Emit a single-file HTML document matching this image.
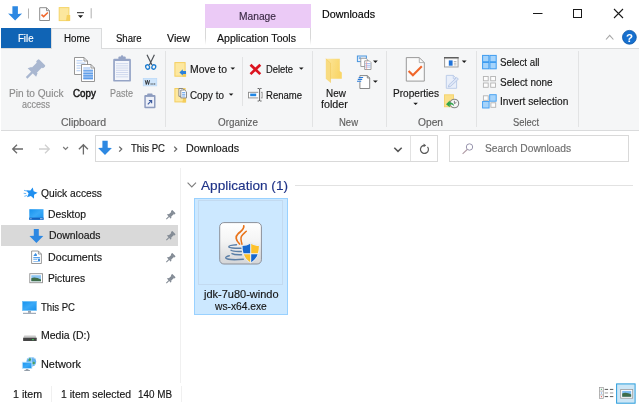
<!DOCTYPE html>
<html>
<head>
<meta charset="utf-8">
<title>Downloads</title>
<style>
html,body{margin:0;padding:0;}
body{width:640px;height:405px;overflow:hidden;background:#fff;position:relative;filter:blur(0.35px);
  font-family:"Liberation Sans",sans-serif;font-size:12px;color:#000;}
.a{position:absolute;box-sizing:border-box;}
.t{position:absolute;white-space:nowrap;line-height:16px;height:16px;transform-origin:0 0;-webkit-text-stroke:0.15px currentColor;}
.sep{position:absolute;width:1px;background:#e2e3e4;}
svg{position:absolute;overflow:visible;}
</style>
</head>
<body>

<!-- title bar -->
<div class="a" style="left:205px;top:3.500px;width:106px;height:24.500px;background:#ebcaf6;"></div>

<!-- tab row -->
<div class="a" style="left:1px;top:48px;width:638px;height:1px;background:#dadbdc;"></div>
<div class="a" style="left:1px;top:27.500px;width:50px;height:20.500px;background:#1064b5;"></div>
<div class="a" style="left:51px;top:27.500px;width:51px;height:21.500px;background:#f5f6f7;border:1px solid #dadbdc;border-bottom:none;"></div>
<div class="a" style="left:205px;top:28px;width:1px;height:17px;background:linear-gradient(#d8d8d8 60%,#fff);"></div>
<div class="a" style="left:310px;top:28px;width:1px;height:17px;background:linear-gradient(#d8d8d8 60%,#fff);"></div>

<!-- ribbon -->
<div class="a" style="left:1px;top:49px;width:638px;height:82px;background:#f5f6f7;"></div>
<div class="a" style="left:1px;top:130px;width:638px;height:1px;background:#dadbdc;"></div>
<div class="sep" style="left:165px;top:51px;height:76px;"></div>
<div class="sep" style="left:242px;top:57px;height:49px;"></div>
<div class="sep" style="left:312px;top:51px;height:76px;"></div>
<div class="sep" style="left:386px;top:51px;height:76px;"></div>
<div class="sep" style="left:476px;top:51px;height:76px;"></div>
<div class="sep" style="left:578px;top:51px;height:76px;"></div>

<!-- address row -->
<div class="a" style="left:95px;top:135px;width:343px;height:27px;border:1px solid #d9d9d9;"></div>
<div class="a" style="left:410px;top:136px;width:1px;height:25px;background:#e2e2e2;"></div>
<div class="a" style="left:448.500px;top:135px;width:180.500px;height:27px;border:1px solid #d9d9d9;"></div>

<!-- nav pane -->
<div class="a" style="left:1px;top:225px;width:177px;height:21px;background:#d9d9d9;"></div>
<div class="a" style="left:180px;top:168px;width:1px;height:215px;background:#f0f0f0;"></div>

<!-- content -->
<div class="a" style="left:295px;top:185px;width:338px;height:1px;background:#e2e2e2;"></div>
<div class="a" style="left:194px;top:198px;width:94px;height:117px;background:#cce8ff;border:1px solid #99d1ff;"></div>
<div class="a" style="left:198px;top:200px;width:85px;height:85px;border:1px solid #c3daf0;"></div>
<div class="a" style="left:51px;top:386px;width:1px;height:16px;background:#f0f0f0;"></div>
<div class="a" style="left:181px;top:386px;width:1px;height:16px;background:#f0f0f0;"></div>

<!-- title bar icons -->
<svg style="left:0;top:0" width="100" height="28" viewBox="0 0 100 28">
  <!-- blue down arrow -->
  <path d="M12.4 6.300h5.500v7.700l4.200-0.500-7 7.100-7-7.100 4.300 0.500z" fill="#2d88e2"/>
  <rect x="28" y="8.5" width="1" height="10" fill="#b4b4b4"/>
  <!-- properties doc -->
  <path d="M39.700 7.700h6.800l3 3v9.800h-9.800z" fill="#fdfdfd" stroke="#8e8e8e" stroke-width="1"/>
  <path d="M46.500 7.700v3h3" fill="none" stroke="#8e8e8e" stroke-width="1"/>
  <path d="M41.500 14.600l2.100 2 4.300-4.100" fill="none" stroke="#f0672c" stroke-width="1.500"/>
  <!-- folder -->
  <rect x="59.200" y="7.600" width="9.700" height="13" fill="#fce79e" stroke="#f6d568" stroke-width="1"/>
  <path d="M66.800 15h3.400v6h-4.200z" fill="#f5d05f"/>
  <!-- dropdown -->
  <rect x="77" y="12.100" width="7" height="1.100" fill="#3a3a3a"/>
  <path d="M77.900 15.200h5.200l-2.600 2.800z" fill="#1a1a1a"/>
  <rect x="90.600" y="8.200" width="1.200" height="10.200" fill="#bcbcbc"/>
</svg>
<!-- window controls -->
<svg style="left:520px;top:0" width="120" height="28" viewBox="520 0 120 28">
  <rect x="533" y="13" width="9.500" height="1" fill="#1a1a1a"/>
  <rect x="573.500" y="9.500" width="8" height="8" fill="none" stroke="#1a1a1a" stroke-width="1"/>
  <path d="M614 9l9 9M623 9l-9 9" stroke="#1a1a1a" stroke-width="1.100" fill="none"/>
</svg>
<!-- ribbon collapse + help -->
<svg style="left:600px;top:28px" width="40" height="20" viewBox="600 28 40 20">
  <path d="M606 39.500l3.700-4.200 3.700 4.200" fill="none" stroke="#a6a6a6" stroke-width="1.100"/>
  <circle cx="629.400" cy="37.300" r="6.900" fill="#1670cf" stroke="#0d56a6" stroke-width="0.800"/>
  <text x="629.400" y="41.600" font-family="Liberation Sans,sans-serif" font-weight="bold" font-size="11.500" fill="#fff" text-anchor="middle">?</text>
</svg>
<!-- ribbon icons -->
<svg style="left:0;top:48px" width="640" height="84" viewBox="0 48 640 84">
  <defs>
    <linearGradient id="gfold" x1="0" y1="0" x2="0" y2="1"><stop offset="0" stop-color="#fdeaa6"/><stop offset="1" stop-color="#f8d366"/></linearGradient>
    <linearGradient id="gfold2" x1="0" y1="0" x2="1" y2="0.300"><stop offset="0" stop-color="#fce69c"/><stop offset="1" stop-color="#f9d669"/></linearGradient>
    <linearGradient id="gdoc" x1="0" y1="0" x2="0" y2="1"><stop offset="0" stop-color="#cfe0f8"/><stop offset="1" stop-color="#8cb8f0"/></linearGradient>
  </defs>
  <!-- pin -->
  <g transform="translate(26.600 77.900) rotate(45)" fill="#a9b7d0">
    <rect x="-1.100" y="-8.500" width="2.200" height="8.500"/>
    <path d="M-6 -7.500h12l-1.600-3.600h-8.800z"/>
    <rect x="-3.600" y="-18.500" width="7.200" height="8"/>
    <rect x="-5" y="-22" width="10" height="4" rx="1.200"/>
  </g>
  <!-- copy -->
  <g>
    <path d="M74.500 57.500h9.500l3.500 3.500v13.500h-13z" fill="#fff" stroke="#8a8a8a" stroke-width="0.900"/>
    <path d="M84 57.500v3.500h3.500" fill="none" stroke="#8a8a8a" stroke-width="0.900"/>
    <g fill="#c3d8f6"><rect x="76.500" y="60" width="6" height="1.300"/><rect x="76.500" y="62.500" width="9" height="1.300"/><rect x="76.500" y="65" width="9" height="1.300"/><rect x="76.500" y="67.500" width="4" height="1.300"/><rect x="76.500" y="70" width="4" height="1.300"/></g>
    <path d="M81.500 64.500h9.500l3.500 3.500v13.500h-13z" fill="#fff" stroke="#8a8a8a" stroke-width="0.900"/>
    <path d="M91 64.500v3.500h3.500" fill="none" stroke="#8a8a8a" stroke-width="0.900"/>
    <rect x="83.300" y="67" width="7" height="2.500" fill="#c6dbf8"/>
    <rect x="83.300" y="69" width="9.700" height="10.500" fill="url(#gdoc)"/>
    <g fill="#4f94e6"><rect x="83.300" y="70.300" width="9.700" height="1"/><rect x="83.300" y="72.800" width="9.700" height="1"/><rect x="83.300" y="75.300" width="9.700" height="1"/><rect x="83.300" y="77.800" width="9.700" height="1"/></g>
  </g>
  <!-- paste (disabled) -->
  <g>
    <rect x="113.200" y="58.800" width="17.700" height="22.800" rx="1.200" fill="#95a4c6"/>
    <rect x="118.400" y="56.500" width="7.300" height="3.600" rx="1" fill="#95a4c6"/>
    <rect x="120.900" y="55.300" width="2.300" height="2" rx="1" fill="#95a4c6"/>
    <rect x="114.900" y="61" width="14.300" height="19" fill="#f4f6fb"/>
    <g fill="#cbd5ec"><rect x="116" y="63.200" width="12.200" height="0.900"/><rect x="116" y="65.400" width="12.200" height="0.900"/><rect x="116" y="67.600" width="12.200" height="0.900"/><rect x="116" y="69.800" width="12.200" height="0.900"/><rect x="116" y="72" width="12.200" height="0.900"/><rect x="116" y="74.200" width="12.200" height="0.900"/><rect x="116" y="76.400" width="12.200" height="0.900"/></g>
  </g>
  <!-- cut -->
  <g fill="none">
    <path d="M147 54.800l5 10.300M154.400 54.800l-5 10.300" stroke="#4d5157" stroke-width="1.200"/>
    <ellipse cx="147.600" cy="67" rx="1.900" ry="2.200" stroke="#1b7bcf" stroke-width="1.300" transform="rotate(-20 147.600 67)"/>
    <ellipse cx="153.800" cy="67" rx="1.900" ry="2.200" stroke="#1b7bcf" stroke-width="1.300" transform="rotate(20 153.800 67)"/>
  </g>
  <!-- copy path -->
  <g>
    <rect x="143.200" y="78.300" width="13.600" height="7.600" fill="#cfe5fb" stroke="#b4d6f8" stroke-width="0.600"/>
    <path d="M145.200 80.200l1.100 4.300 1.100-4.300 1.100 4.300 1.100-4.300" fill="none" stroke="#1a1a1a" stroke-width="0.800"/>
    <rect x="150.600" y="83.500" width="1" height="1" fill="#1a1a1a"/><rect x="152.400" y="83.500" width="1" height="1" fill="#1a1a1a"/><rect x="154.200" y="83.500" width="1" height="1" fill="#1a1a1a"/>
  </g>
  <!-- paste shortcut -->
  <g>
    <rect x="144.300" y="95" width="11.200" height="13.200" rx="1" fill="#8d9cbf"/>
    <rect x="147.200" y="93.600" width="5.400" height="2.600" rx="0.800" fill="#8d9cbf"/>
    <rect x="145.800" y="96.900" width="8.200" height="9.800" fill="#eef1f9"/>
    <path d="M147.800 104.300l3.400-3.400M148.900 100.500h2.700v2.700" fill="none" stroke="#3e5c9e" stroke-width="1.200"/>
  </g>
  <!-- move to -->
  <g>
    <rect x="174.900" y="62.600" width="10.200" height="13.600" fill="#fde8a0" stroke="#f4cf5f"/>
    <path d="M183.200 71.500h2.900v5.200h-3.700z" fill="#f4cd5b"/>
    <path d="M186 70.900v3h-3.200v1.700l-3.400-3.200 3.400-3.200v1.700z" fill="#2a80dc"/>
    <path d="M230.500 67.500h4.600l-2.300 2.300z" fill="#1a1a1a"/>
  </g>
  <!-- copy to -->
  <g>
    <rect x="174.900" y="88.500" width="10.200" height="13.400" fill="#fde8a0" stroke="#f4cf5f"/>
    <path d="M183.200 97.500h2.900v4.900h-3.700z" fill="#f4cd5b"/>
    <path d="M178.900 88.500h3.900l1.800 1.800v6h-5.700z" fill="#fff" stroke="#7d7d7d" stroke-width="0.900"/>
    <path d="M180.800 90h3.900l1.800 1.800v6.100h-5.700z" fill="#fff" stroke="#7d7d7d" stroke-width="0.900"/>
    <path d="M182.100 92.600h3.200M182.100 94.300h3.200M182.100 96h3.200" stroke="#5b9be8" stroke-width="0.900"/>
    <path d="M228.800 93.400h4.600l-2.300 2.300z" fill="#1a1a1a"/>
  </g>
  <!-- delete -->
  <path d="M250.500 64.700l9.800 9.400M260.300 64.700l-9.800 9.400" stroke="#dc1420" stroke-width="2.700" fill="none"/>
  <path d="M299 67.500h4.600l-2.300 2.300z" fill="#1a1a1a"/>
  <!-- rename -->
  <g>
    <rect x="248.500" y="92.300" width="13.600" height="5.600" fill="#fff" stroke="#8a8a8a" stroke-width="0.900"/>
    <rect x="250.200" y="93.600" width="6" height="2.600" fill="#1f86e4"/>
    <rect x="258.200" y="90" width="2.800" height="9.500" fill="#f5f6f7"/>
    <path d="M259.600 88.800v12M257.600 88.500h1.400l0.600 0.500 0.600-0.500h1.400M257.600 101h1.400l0.600-0.500 0.600 0.500h1.400" fill="none" stroke="#555" stroke-width="0.900"/>
  </g>
  <!-- new folder -->
  <g>
    <path d="M326 58.700h13.800v12.200l2 1.500v6.300h-12z" fill="url(#gfold2)"/>
    <path d="M325.800 58.700l4.700 4.400v19.600l-4.700-4z" fill="#f8db80"/>
    <path d="M325.800 58.700l4.700 4.400v19.600" fill="none" stroke="#f1ca5c" stroke-width="0.600"/>
  </g>
  <!-- new item -->
  <g>
    <rect x="357.400" y="56" width="9" height="5.600" fill="#e4effb" stroke="#4a96de" stroke-width="1"/>
    <rect x="358.800" y="57.300" width="2.200" height="1.600" fill="#6aa9e6"/>
    <path d="M360.800 58.300h5.200l1.600 1.600v6.600h-6.800z" fill="#fff" stroke="#8a8a8a" stroke-width="0.800"/>
    <path d="M364.700 60.800h4.600l1.700 1.700v7h-6.300z" fill="#fff" stroke="#8a8a8a" stroke-width="0.800"/>
    <path d="M365.300 63.500h5.200M365.300 65.300h5.200M365.300 67.100h5.200" stroke="#7fa6ec" stroke-width="0.700"/>
    <path d="M366.600 61.500v7.800" stroke="#ee9a9a" stroke-width="0.700"/>
    <path d="M373 60.600h4.800l-2.400 2.400z" fill="#1a1a1a"/>
  </g>
  <!-- easy access -->
  <g>
    <path d="M359.900 75.600h7.400l2.400 2.400v10.500h-9.800z" fill="#fff" stroke="#7a7a7a" stroke-width="0.900"/>
    <path d="M367.300 75.600v2.400h2.400" fill="none" stroke="#7a7a7a" stroke-width="0.900"/>
    <rect x="359.300" y="76.700" width="1.400" height="5.500" fill="#f5f6f7"/>
    <path d="M358.700 77.500h4.400M357.800 79.400h4.400M357 81.300h4.200" stroke="#2b7bd8" stroke-width="1.100"/>
    <path d="M373 80.400h4.800l-2.400 2.400z" fill="#1a1a1a"/>
  </g>
  <!-- properties -->
  <g>
    <path d="M406.300 57.600h13l5 5v18.500h-18z" fill="#fafafa" stroke="#8e8e8e" stroke-width="0.900"/>
    <path d="M419.300 57.600v5h5" fill="none" stroke="#a0a0a0" stroke-width="0.800"/>
    <path d="M408.600 71l4.300 4.200 8.900-8.900" fill="none" stroke="#f0662a" stroke-width="2.100"/>
    <path d="M413.300 102.700h4.600l-2.300 2.300z" fill="#1a1a1a"/>
  </g>
  <!-- open -->
  <g>
    <rect x="444.500" y="57.500" width="13.600" height="9.500" fill="#f2f2f2" stroke="#9c9c9c" stroke-width="0.900"/>
    <rect x="444" y="57" width="14.600" height="1.500" fill="#5e5e5e"/>
    <rect x="445.800" y="59.800" width="11" height="6.200" fill="#fff"/>
    <rect x="448.800" y="60.400" width="3.800" height="5.300" fill="#1f72d8"/>
    <path d="M453.800 61.500h2.600M453.800 63.200h2.600M453.800 64.900h2.600" stroke="#9a9a9a" stroke-width="0.700"/>
    <path d="M461.800 60.600h4.800l-2.400 2.400z" fill="#1a1a1a"/>
  </g>
  <!-- edit (disabled) -->
  <g>
    <path d="M446.300 75.400h7l3.300 3.300v9.600h-10.300z" fill="#e9effa" stroke="#b7c8e7" stroke-width="0.900"/>
    <path d="M453.300 75.400v3.300h3.300" fill="none" stroke="#b7c8e7" stroke-width="0.800"/>
    <path d="M448.300 87l0.600-2.200 7.800-7.300 1.700 1.600-7.800 7.300z" fill="#dde6f6" stroke="#b0c2e3" stroke-width="0.800"/>
  </g>
  <!-- history -->
  <g>
    <rect x="444.400" y="94.800" width="9.200" height="12" fill="#fbe08a" stroke="#f3cf62" stroke-width="0.800"/>
    <circle cx="454.400" cy="103.500" r="4.300" fill="#f6f6f6" stroke="#858585" stroke-width="1.100"/>
    <path d="M454.400 100.800v2.800l2-1.200" fill="none" stroke="#666" stroke-width="0.800"/>
    <path d="M446 104.200l3.800-3.600v2c2.300-0.300 4 0.900 4.400 3.600-1.100-1.300-2.400-1.800-4.400-1.600v2.600z" fill="#2fa54c"/>
  </g>
  <!-- select all -->
  <g fill="#a6d4fb" stroke="#3e9cf0" stroke-width="1">
    <rect x="482.600" y="55.400" width="6.300" height="6.300"/><rect x="489.900" y="55.400" width="6.300" height="6.300"/>
    <rect x="482.600" y="62.500" width="6.300" height="6.300"/><rect x="489.900" y="62.500" width="6.300" height="6.300"/>
  </g>
  <!-- select none -->
  <g fill="#fdfdfd" stroke="#b3b3b3" stroke-width="0.900">
    <rect x="483.400" y="76.500" width="4.800" height="4.300"/><rect x="490.700" y="76.500" width="4.800" height="4.300"/>
    <rect x="483.400" y="83" width="4.800" height="4.300"/><rect x="490.700" y="83" width="4.800" height="4.300"/>
  </g>
  <!-- invert -->
  <g stroke-width="0.900">
    <rect x="483.400" y="95.800" width="4.800" height="4.500" fill="#fdfdfd" stroke="#b3b3b3"/>
    <rect x="490.900" y="102.800" width="4.800" height="4.500" fill="#fdfdfd" stroke="#b3b3b3"/>
    <rect x="489.700" y="94.700" width="6.500" height="6.500" fill="#a6d4fb" stroke="#3e9cf0"/>
    <rect x="482.600" y="101.500" width="6.500" height="6.500" fill="#a6d4fb" stroke="#3e9cf0"/>
  </g>
</svg>
<!-- address row icons -->
<svg style="left:0;top:131px" width="640" height="36" viewBox="0 131 640 36">
  <path d="M23 149h-10M17 144.800l-4.300 4.200 4.300 4.200" fill="none" stroke="#6a6a6a" stroke-width="1.300"/>
  <path d="M39 149h10M45 144.800l4.300 4.200-4.300 4.200" fill="none" stroke="#d0d0d0" stroke-width="1.300"/>
  <path d="M63.200 147l2.400 2.500 2.400-2.500" fill="none" stroke="#7a7a7a" stroke-width="1.200"/>
  <path d="M83.400 154.400v-9.500M78.900 149.200l4.500-4.500 4.500 4.500" fill="none" stroke="#6a6a6a" stroke-width="1.300"/>
  <path d="M102.400 140.800h5.300v7l4.200 0.200-6.900 7-6.900-7 4.300-0.200z" fill="#2d88e2"/>
  <path d="M119.200 146.600l2.500 2.500-2.500 2.500" fill="none" stroke="#666" stroke-width="1.300"/>
  <path d="M174.200 146.600l2.500 2.500-2.500 2.500" fill="none" stroke="#666" stroke-width="1.300"/>
  <path d="M394.300 147.800l3.700 3.600 3.700-3.600" fill="none" stroke="#555" stroke-width="1.500"/>
  <path d="M427.500 146.800a4 4 0 1 1-3.400-1.400" fill="none" stroke="#5a5a5a" stroke-width="1.200"/>
  <path d="M423.600 143.600l2.600 1.800-2.600 1.800z" fill="#5a5a5a"/>
  <circle cx="469.500" cy="147" r="3.200" fill="none" stroke="#9794ad" stroke-width="1"/>
  <path d="M467.200 149.500l-4.600 4.300" stroke="#b09ba5" stroke-width="1.100"/>
</svg>
<!-- nav icons -->
<svg style="left:0;top:168px" width="182" height="216" viewBox="0 168 182 216">
  <defs>
    <linearGradient id="gscr" x1="0" y1="0" x2="1" y2="1"><stop offset="0" stop-color="#1692ee"/><stop offset="0.500" stop-color="#3aa9f7"/><stop offset="1" stop-color="#1792ee"/></linearGradient>
  </defs>
  <!-- quick access star -->
  <path transform="rotate(12 31.500 193.300) translate(0.500 -0.200)" d="M31 187.600l1.700 3.500 4.100 0.500-3 2.700 0.800 4-3.600-2-3.600 2 0.800-4-3-2.700 4.100-0.500z" fill="#1f8ff0"/>
  <path d="M24 190.300l3 0.800M23.700 193.300l2.500 0.300M24.300 196.300l2.600-0.800" stroke="#5aaef5" stroke-width="0.900"/>
  <!-- desktop -->
  <rect x="29.300" y="209.200" width="14.200" height="10.600" fill="url(#gscr)"/>
  <rect x="29.300" y="217.600" width="14.200" height="2.200" fill="#1560bd"/>
  <rect x="30.300" y="218.400" width="1.200" height="0.800" fill="#cfe6ff"/><rect x="40" y="218.400" width="2.600" height="0.800" fill="#cfe6ff"/>
  <!-- downloads -->
  <path d="M33.800 228.900h5v6.800l4.500 0.200-6.900 7.100-6.900-7.100 4.300-0.200z" fill="#2d88e2"/>
  <!-- documents -->
  <path d="M31.600 251h6.800l3 3v9.500h-9.800z" fill="#fff" stroke="#8e8e8e" stroke-width="0.900"/>
  <path d="M38.400 251v3h3" fill="none" stroke="#8e8e8e" stroke-width="0.900"/>
  <path d="M33.300 256l2.200-3 1.400 1.600v1.400z" fill="#3d8fe0"/>
  <rect x="33.300" y="257" width="6.600" height="1.300" fill="#5aa2ea"/><rect x="33.300" y="259" width="4" height="1" fill="#8bbdf0"/><rect x="38" y="258.800" width="2" height="2.200" fill="#3d8fe0"/><rect x="33.300" y="261" width="6.600" height="0.900" fill="#8bbdf0"/>
  <!-- pictures -->
  <rect x="29.800" y="273.700" width="12.700" height="9" fill="#fff" stroke="#8e8e8e" stroke-width="0.900"/>
  <rect x="31.300" y="275.200" width="9.700" height="6" fill="#8ec5f2"/>
  <path d="M31.300 278.200c3-1.500 6-0.500 9.700 1.200v1.800h-9.700z" fill="#3f6d4a"/>
  <!-- pins -->
  <g transform="translate(166.300 219.2) rotate(45) scale(0.9)" fill="#838b95">
    <rect x="-0.550" y="-4.500" width="1.100" height="4.500"/>
    <path d="M-3.200 -4h6.400l-0.900-1.900h-4.600z"/>
    <rect x="-1.900" y="-10" width="3.800" height="4.400"/>
    <rect x="-2.700" y="-12" width="5.400" height="2.300" rx="0.600"/>
  </g>
  <g transform="translate(166.300 240.2) rotate(45) scale(0.9)" fill="#838b95">
    <rect x="-0.550" y="-4.500" width="1.100" height="4.500"/>
    <path d="M-3.200 -4h6.400l-0.900-1.900h-4.600z"/>
    <rect x="-1.900" y="-10" width="3.800" height="4.400"/>
    <rect x="-2.700" y="-12" width="5.400" height="2.300" rx="0.600"/>
  </g>
  <g transform="translate(166.300 262.2) rotate(45) scale(0.9)" fill="#838b95">
    <rect x="-0.550" y="-4.500" width="1.100" height="4.500"/>
    <path d="M-3.200 -4h6.400l-0.900-1.900h-4.600z"/>
    <rect x="-1.900" y="-10" width="3.800" height="4.400"/>
    <rect x="-2.700" y="-12" width="5.400" height="2.300" rx="0.600"/>
  </g>
  <g transform="translate(166.300 283.2) rotate(45) scale(0.9)" fill="#838b95">
    <rect x="-0.550" y="-4.500" width="1.100" height="4.500"/>
    <path d="M-3.200 -4h6.400l-0.900-1.900h-4.600z"/>
    <rect x="-1.900" y="-10" width="3.800" height="4.400"/>
    <rect x="-2.700" y="-12" width="5.400" height="2.300" rx="0.600"/>
  </g>
  <!-- this pc -->
  <rect x="22.500" y="301.400" width="14" height="9" fill="url(#gscr)" stroke="#6fc0f7" stroke-width="0.800"/>
  <rect x="28" y="310.800" width="3" height="2" fill="#9aa3ad"/>
  <rect x="23" y="312.800" width="13" height="1" fill="#8a98a8"/>
  <!-- media drive -->
  <path d="M24.300 335.500h11.200l1.200 2.500h-13.600z" fill="#c9c9c9"/>
  <rect x="23.100" y="337.800" width="13.600" height="3.300" rx="0.500" fill="#454545"/>
  <rect x="32.200" y="339" width="1.500" height="1.200" fill="#39d353"/>
  <!-- network -->
  <circle cx="31.300" cy="361.800" r="4.900" fill="#5fb0ee"/>
  <path d="M27.500 359c2-1.500 5-2 7.500-0.500M28 364.500c2 1 5 1 7.200-0.800M31.300 357v9.600" fill="none" stroke="#bfe0fa" stroke-width="0.800"/>
  <path d="M29 358.500c1.500-0.500 2.500 0.500 2 1.500s-2 1.500-2.500 0.500z M32.500 362c1-0.500 2.500 0 2.500 1s-1.500 2-2.500 1z" fill="#4aa060"/>
  <rect x="22.300" y="362.200" width="9.600" height="6.300" fill="url(#gscr)" stroke="#bfe3fb" stroke-width="0.800"/>
  <rect x="25.800" y="369" width="2.600" height="1.200" fill="#9aa3ad"/>
  <rect x="24.300" y="370.200" width="5.600" height="0.800" fill="#7d8a98"/>
</svg>
<!-- content: chevron + file icon -->
<svg style="left:182px;top:168px" width="458" height="216" viewBox="182 168 458 216">
  <defs>
    <linearGradient id="gico" x1="0" y1="0" x2="0" y2="1"><stop offset="0" stop-color="#ffffff"/><stop offset="0.450" stop-color="#f4f4f4"/><stop offset="1" stop-color="#d4d5d7"/></linearGradient>
  </defs>
  <path d="M187.600 182.600l4.200 4.400 4.200-4.400" fill="none" stroke="#7d7d7d" stroke-width="1.100"/>
  <rect x="219.700" y="222.600" width="41.700" height="41.400" rx="4.200" fill="url(#gico)" stroke="#8b909a" stroke-width="1"/>
  <!-- java steam -->
  <path d="M243.800 225.900c0.600 3.200-2.800 5.200-5.600 7.800-3 2.800-2.800 6.200 1.400 10.300" fill="none" stroke="#e8731a" stroke-width="1.700" stroke-linecap="round"/>
  <path d="M246.300 231.200c-1.600 1.600-3.800 3-4.900 5.200-1.100 2.300-0.200 5 0.600 7.800" fill="none" stroke="#e8731a" stroke-width="1.500" stroke-linecap="round"/>
  <!-- java cup -->
  <g fill="none" stroke="#5b7fa7" stroke-width="1.400" stroke-linecap="round">
    <path d="M236.500 244.800c-4.200 0.300-7.700 1-7.700 1.900 0 1.100 5.500 1.700 12.500 1.500"/>
    <path d="M231 250.300c1.200 0.900 5.500 1.400 10.500 1.200"/>
    <path d="M232 253.600c1.600 0.900 5.200 1.300 9.500 1.100"/>
    <path d="M229.300 255.800c-2.500 0.600-4 1.400-3.500 2.300 0.800 1.300 8 2 17.500 1.200"/>
  </g>
  <!-- shield -->
  <path d="M250.700 242.700c2.800 1.800 5.900 2.700 9 2.700 0 8.200-2.400 14-9 17.700-6.600-3.700-9-9.500-9-17.700 3.100 0 6.200-0.900 9-2.700z" fill="#f4f7fb" stroke="#dfe3e8" stroke-width="0.500"/>
  <path d="M250.200 243.800c-2.500 1.500-5 2.200-7.700 2.300 0 2.700 0.300 5.100 1 7.200h6.700z" fill="#1868cf"/>
  <path d="M251.200 243.800c2.500 1.500 5 2.200 7.700 2.300 0 2.700-0.300 5.100-1 7.200h-6.700z" fill="#fdc12c"/>
  <path d="M250.200 254.300h-6.400c1.100 3.300 3.200 5.900 6.400 7.900z" fill="#fdc12c"/>
  <path d="M251.200 254.300h6.400c-1.100 3.300-3.200 5.900-6.400 7.900z" fill="#1868cf"/>
</svg>
<!-- status bar icons -->
<svg style="left:590px;top:380px" width="50" height="25" viewBox="590 380 50 25">
  <rect x="599.400" y="387.400" width="3.900" height="11.200" fill="#fafafa" stroke="#9a9a9a" stroke-width="0.700"/>
  <path d="M599.400 391.100h3.900M599.400 394.900h3.900" stroke="#9a9a9a" stroke-width="0.600"/>
  <rect x="600.900" y="388.800" width="1" height="1" fill="#3a9a5a"/><rect x="600.900" y="392.500" width="1" height="1" fill="#4a8ae0"/><rect x="600.900" y="396.200" width="1" height="1" fill="#e04040"/>
  <g fill="#5a5a5a"><rect x="604.700" y="388.900" width="3.400" height="1"/><rect x="609.900" y="388.900" width="3.400" height="1"/><rect x="604.700" y="396.100" width="3.400" height="1"/><rect x="609.900" y="396.100" width="3.400" height="1"/></g>
  <g fill="#a5a5a5"><rect x="604.700" y="392.400" width="3.400" height="1.100"/><rect x="609.900" y="392.400" width="3.400" height="1.100"/></g>
  <rect x="616.600" y="383.900" width="18.500" height="19.300" fill="#cce6f6" stroke="#2a9ddc" stroke-width="1"/>
  <rect x="620.700" y="389.400" width="12" height="8.800" fill="#fff" stroke="#999" stroke-width="0.800"/>
  <rect x="622.200" y="390.900" width="9" height="5.800" fill="#7fbdf0"/>
  <path d="M622.200 393.500c3-1.500 6-0.500 9 1v2.200h-9z" fill="#3f6d4a"/>
</svg>


<div class="t" style="left:239px;top:9px;font-size:10px;transform:scaleX(1.0238);color:#3b2b45;">Manage</div>
<div class="t" style="left:322px;top:6.5px;font-size:10px;transform:scaleX(1.0710);color:#000;">Downloads</div>
<div class="t" style="left:18px;top:30.5px;font-size:10px;transform:scaleX(0.9612);color:#fff;">File</div>
<div class="t" style="left:63.5px;top:30.5px;font-size:10px;transform:scaleX(0.9742);color:#111;">Home</div>
<div class="t" style="left:116px;top:30.5px;font-size:10px;transform:scaleX(0.9555);color:#111;">Share</div>
<div class="t" style="left:167px;top:30.5px;font-size:10px;transform:scaleX(1.0698);color:#111;">View</div>
<div class="t" style="left:217px;top:30.5px;font-size:10px;transform:scaleX(1.0551);color:#111;">Application Tools</div>
<div class="t" style="left:8.5px;top:85.5px;font-size:10px;transform:scaleX(1.0107);color:#8c8c8c;">Pin to Quick</div>
<div class="t" style="left:21.5px;top:96.5px;font-size:10px;transform:scaleX(0.8996);color:#8c8c8c;">access</div>
<div class="t" style="left:72.5px;top:85.5px;font-size:10px;transform:scaleX(0.9846);color:#161616;-webkit-text-stroke:0.45px currentColor;">Copy</div>
<div class="t" style="left:110px;top:85.5px;font-size:10px;transform:scaleX(0.8992);color:#8c8c8c;">Paste</div>
<div class="t" style="left:61px;top:114.5px;font-size:10px;transform:scaleX(1.0511);color:#5f5f5f;">Clipboard</div>
<div class="t" style="left:190px;top:61.5px;font-size:10px;transform:scaleX(1.0400);color:#161616;">Move to</div>
<div class="t" style="left:190px;top:87.5px;font-size:10px;transform:scaleX(0.9864);color:#161616;">Copy to</div>
<div class="t" style="left:266px;top:61.5px;font-size:10px;transform:scaleX(0.9341);color:#161616;">Delete</div>
<div class="t" style="left:266px;top:87.5px;font-size:10px;transform:scaleX(0.9521);color:#161616;">Rename</div>
<div class="t" style="left:218px;top:114.5px;font-size:10px;transform:scaleX(0.9858);color:#5f5f5f;">Organize</div>
<div class="t" style="left:325.5px;top:85.5px;font-size:10px;transform:scaleX(0.9892);color:#161616;">New</div>
<div class="t" style="left:321.4px;top:96.5px;font-size:10px;transform:scaleX(1.0753);color:#161616;">folder</div>
<div class="t" style="left:339px;top:114.5px;font-size:10px;transform:scaleX(0.9493);color:#5f5f5f;">New</div>
<div class="t" style="left:393px;top:85.5px;font-size:10px;transform:scaleX(1.0093);color:#161616;">Properties</div>
<div class="t" style="left:418px;top:114.5px;font-size:10px;transform:scaleX(1.0217);color:#5f5f5f;">Open</div>
<div class="t" style="left:499.9px;top:54.5px;font-size:10px;transform:scaleX(0.9734);color:#161616;">Select all</div>
<div class="t" style="left:499.9px;top:74.5px;font-size:10px;transform:scaleX(0.9938);color:#161616;">Select none</div>
<div class="t" style="left:499.9px;top:93.5px;font-size:10px;transform:scaleX(1.0154);color:#161616;">Invert selection</div>
<div class="t" style="left:513px;top:114.5px;font-size:10px;transform:scaleX(0.9354);color:#5f5f5f;">Select</div>
<div class="t" style="left:131px;top:140.5px;font-size:10px;transform:scaleX(0.9561);color:#161616;">This PC</div>
<div class="t" style="left:186px;top:140.5px;font-size:10px;transform:scaleX(1.0710);color:#161616;">Downloads</div>
<div class="t" style="left:485px;top:140.5px;font-size:10px;transform:scaleX(1.0246);color:#6d6d6d;">Search Downloads</div>
<div class="t" style="left:41px;top:185.5px;font-size:10px;transform:scaleX(1.0257);color:#161616;">Quick access</div>
<div class="t" style="left:48px;top:206.5px;font-size:10px;transform:scaleX(1.0358);color:#161616;">Desktop</div>
<div class="t" style="left:48.5px;top:228px;font-size:10px;transform:scaleX(1.0407);color:#161616;">Downloads</div>
<div class="t" style="left:48px;top:249.5px;font-size:10px;transform:scaleX(1.0677);color:#161616;">Documents</div>
<div class="t" style="left:48px;top:270.5px;font-size:10px;transform:scaleX(1.0242);color:#161616;">Pictures</div>
<div class="t" style="left:41px;top:299.5px;font-size:10px;transform:scaleX(0.9561);color:#161616;">This PC</div>
<div class="t" style="left:41px;top:327.5px;font-size:10px;transform:scaleX(1.0495);color:#161616;">Media (D:)</div>
<div class="t" style="left:41px;top:356.5px;font-size:10px;transform:scaleX(1.0903);color:#161616;">Network</div>
<div class="t" style="left:201px;top:177.5px;font-size:13px;transform:scaleX(1.0468);color:#1e3287;">Application (1)</div>
<div class="t" style="left:203.7px;top:286.5px;font-size:10px;transform:scaleX(1.0984);color:#161616;">jdk-7u80-windo</div>
<div class="t" style="left:215.3px;top:298.5px;font-size:10px;transform:scaleX(1.0242);color:#161616;">ws-x64.exe</div>
<div class="t" style="left:13px;top:386.5px;font-size:10px;transform:scaleX(1.0648);color:#161616;">1 item</div>
<div class="t" style="left:61px;top:386.5px;font-size:10px;transform:scaleX(1.0407);color:#161616;">1 item selected</div>
<div class="t" style="left:138px;top:386.5px;font-size:10px;transform:scaleX(0.9864);color:#161616;">140 MB</div>

</body>
</html>
